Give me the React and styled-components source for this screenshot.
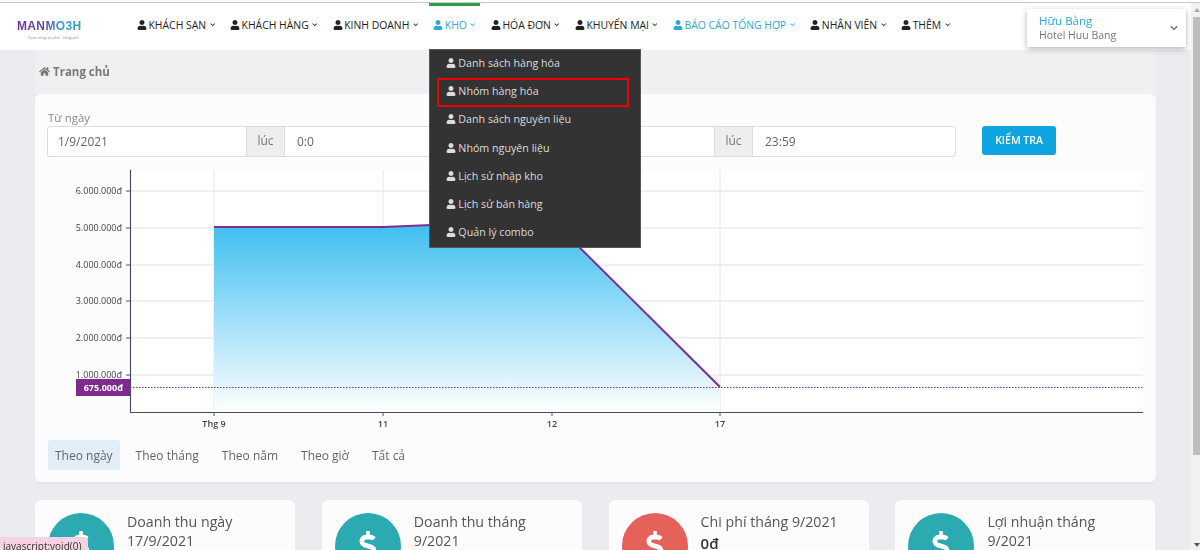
import React from "react";
import styled, { createGlobalStyle } from "styled-components";
import { FaUser, FaHome, FaDollarSign, FaChevronDown } from "react-icons/fa";

const Global = createGlobalStyle`
  html, body { margin: 0; height: 550px; overflow: hidden; background: #ebecf0; }
  body { font-family: "Open Sans", "Noto Sans", sans-serif; color: #555; }
  * { box-sizing: border-box; }
`;

const Page = styled.div`
  position: relative;
  width: 1200px;
  height: 550px;
  overflow: hidden;
  filter: blur(0.35px);
`;
const TopStrip = styled.div`
  height: 3px;
  background: #fff;
  border-bottom: 1px solid #c9c9c9;
`;
const Nav = styled.header`
  height: 47px;
  background: #fff;
  display: flex;
  align-items: stretch;
  padding-left: 17px;
  position: relative;
`;
const Logo = styled.div`
  width: 116px;
  flex: none;
  display: flex;
  flex-direction: column;
  padding-top: 16px;
`;
const LogoMark = styled.span`
  font: 700 12px/14px "Liberation Sans", sans-serif;
  letter-spacing: 0.35px;
  background: linear-gradient(90deg, #7b2d96 0%, #5f45ad 42%, #2f9fdc 68%, #2f9fdc 100%);
  -webkit-background-clip: text;
  background-clip: text;
  color: transparent;
  width: 66px;
`;
const LogoSub = styled.span`
  font: 4px/5px "Open Sans", sans-serif;
  color: #888;
  padding-left: 11px;
  margin-top: 2px;
`;
const Menu = styled.nav`
  display: flex;
  align-items: stretch;
  gap: 7px;
`;
const MenuItem = styled.div`
  position: relative;
  display: flex;
  align-items: center;
  gap: 1.5px;
  padding: 0 4px 7px;
  font-size: 10.4px;
  white-space: nowrap;
  color: ${(p) => (p.$blue ? "#2ea7e0" : "#222")};
  text-transform: uppercase;
  border-top: 3px solid ${(p) => (p.$active ? "#2f9e44" : "transparent")};
`;
const Caret = styled(FaChevronDown)`
  font-size: 5.5px;
  margin-left: 2px;
`;
const UserIcon = styled(FaUser)`
  font-size: 10px;
  flex: none;
`;
const Dropdown = styled.div`
  position: absolute;
  top: 43px;
  left: 0;
  width: 212px;
  height: 199px;
  background: #333;
  border: 1px solid #555;
  z-index: 5;
  text-transform: none;
`;
const DropItem = styled.div`
  height: 28.2px;
  display: flex;
  align-items: center;
  gap: 2px;
  padding: 0 0 2px 16px;
  font-size: 10.7px;
  color: #dcdcdc;
`;
const RedBox = styled.div`
  position: absolute;
  left: 7px;
  top: 28px;
  width: 192px;
  height: 29px;
  border: 2px solid #f00000;
`;
const UserBox = styled.div`
  position: absolute;
  left: 1027px;
  top: 6px;
  width: 159px;
  height: 38px;
  background: #fff;
  box-shadow: 0 2px 6px rgba(0, 0, 0, 0.3);
  display: flex;
  align-items: center;
  justify-content: space-between;
  padding: 0 8px 0 12px;
  z-index: 3;
`;
const UserName = styled.div`
  font-size: 11.5px;
  line-height: 14px;
  color: #2ea7e0;
`;
const UserHotel = styled.div`
  font-size: 10.5px;
  line-height: 14px;
  color: #777;
`;
const UserCaret = styled(FaChevronDown)`
  font-size: 8px;
  color: #666;
`;
const Crumb = styled.div`
  margin: 0 44px 0 35px;
  height: 44px;
  display: flex;
  align-items: center;
  gap: 3px;
  padding: 0 4px 2px;
  background: #f0f0f2;
  font-size: 11.5px;
  font-weight: 700;
  color: #777;
`;
const Content = styled.main`
  padding: 0 44px 0 35px;
`;
const Card = styled.section`
  background: #fcfcfc;
  border-radius: 6px;
  box-shadow: 0 1px 2px rgba(0, 0, 0, 0.04);
  height: 388px;
  padding-top: 15px;
`;
const Form = styled.div`
  display: flex;
  align-items: flex-end;
  padding: 0 12px;
  height: 48px;
`;
const Field = styled.div`
  width: 444px;
  margin-right: ${(p) => p.$gap}px;
`;
const Label = styled.div`
  font-size: 11.4px;
  line-height: 16px;
  padding-left: 1px;
  color: #888;
`;
const Group = styled.div`
  display: flex;
  height: 31px;
  border: 1px solid #dcdcdc;
  border-radius: 3px;
  background: #fff;
`;
const Input = styled.div`
  flex: ${(p) => (p.$w ? `0 0 ${p.$w}px` : 1)};
  padding-left: ${(p) => (p.$w ? 10 : 12)}px;
  font-size: 12px;
  line-height: 30px;
  color: #666;
`;
const Addon = styled.div`
  flex: 0 0 39px;
  background: #eeeeee;
  border: 1px solid #dcdcdc;
  border-width: 0 1px;
  text-align: center;
  font-size: 12px;
  line-height: 27px;
  color: #777;
`;
const CheckBtn = styled.div`
  width: 74px;
  height: 29px;
  margin: 0 0 2px 26px;
  background: #0ea5e0;
  border-radius: 3px;
  color: #fff;
  font-size: 10.5px;
  font-weight: 600;
  text-align: center;
  line-height: 29px;
`;
const ChartSvg = styled.svg`
  display: block;
  margin-top: 13px;
  font-family: "Open Sans", sans-serif;
`;
const Tabs = styled.div`
  display: flex;
  padding-left: 13px;
  gap: 9px;
`;
const Tab = styled.div`
  height: 30px;
  line-height: 31px;
  padding: 0 7px;
  border-radius: 3px;
  font-size: 12px;
  color: #666;
  background: ${(p) => (p.$active ? "#e1eef8" : "transparent")};
`;
const Stats = styled.div`
  display: grid;
  grid-template-columns: repeat(4, 260px);
  column-gap: 26.8px;
  margin-top: 18px;
`;
const Stat = styled.div`
  background: #fcfcfc;
  border-radius: 6px;
  height: 120px;
  display: flex;
  padding: 13px 0 0 13px;
  gap: 13px;
`;
const Circle = styled.div`
  width: 66px;
  height: 66px;
  border-radius: 50%;
  background: ${(p) => p.$color};
  color: #fff;
  flex: none;
  display: flex;
  justify-content: center;
  padding-top: 18px;
  font-size: 30px;
`;
const StatTitle = styled.div`
  font-size: 14.2px;
  line-height: 20px;
  color: #555;
  margin-top: -1px;
`;
const StatValue = styled.div`
  font-size: 15px;
  line-height: 22px;
  font-weight: 600;
  color: #333;
`;
const Scrollbar = styled.div`
  position: absolute;
  right: 0;
  top: 3px;
  bottom: 0;
  width: 9px;
  background: #f1f1f1;
  z-index: 4;
`;
const ScrollThumb = styled.div`
  position: absolute;
  left: 2px;
  right: 0;
  top: 14px;
  height: 438px;
  background: #bdbdbd;
`;
const ScrollArrow = styled.div`
  position: absolute;
  left: 3px;
  ${(p) => (p.$down ? "bottom: 3px; border-top: 4px solid #555;" : "top: 5px; border-bottom: 4px solid #aaa;")}
  border-left: 3px solid transparent;
  border-right: 3px solid transparent;
`;
const Status = styled.div`
  position: absolute;
  left: 0;
  bottom: -1px;
  height: 14px;
  padding: 0 2px 0 3px;
  width: 88px;
  background: #f6d2e2;
  border-top-right-radius: 4px;
  font-size: 10px;
  line-height: 19px;
  color: #333;
  z-index: 6;
`;

const navItems = [
  { t: "Khách sạn" },
  { t: "Khách hàng" },
  { t: "Kinh doanh" },
  { t: "Kho", blue: true, active: true },
  { t: "Hóa đơn" },
  { t: "Khuyến mại" },
  { t: "Báo cáo tổng hợp", blue: true },
  { t: "Nhân viên" },
  { t: "Thêm" },
];
const drop = ["Danh sách hàng hóa", "Nhóm hàng hóa", "Danh sách nguyên liệu", "Nhóm nguyên liệu", "Lịch sử nhập kho", "Lịch sử bán hàng", "Quản lý combo"];
const yLabels = [
  ["6.000.000đ", 191],
  ["5.000.000đ", 228],
  ["4.000.000đ", 265],
  ["3.000.000đ", 301],
  ["2.000.000đ", 338],
  ["1.000.000đ", 375],
];
const xLabels = [["Thg 9", 214], ["11", 383], ["12", 552], ["17", 720]];
const tabs = [["Theo ngày", true], ["Theo tháng"], ["Theo năm"], ["Theo giờ"], ["Tất cả"]];
const stats = [
  { a: "Doanh thu ngày", b: "17/9/2021", c: "#2baab1" },
  { a: "Doanh thu tháng", b: "9/2021", c: "#2baab1" },
  { a: "Chi phí tháng 9/2021", v: "0đ", c: "#e5625a" },
  { a: "Lợi nhuận tháng", b: "9/2021", c: "#2baab1" },
];

function Chart() {
  return (
    <ChartSvg width="1121" height="270" viewBox="35 170 1121 270">
      <defs>
        <linearGradient id="area" x1="0" y1="220" x2="0" y2="412" gradientUnits="userSpaceOnUse">
          <stop offset="0" stopColor="#3abdf0" />
          <stop offset="1" stopColor="#ffffff" />
        </linearGradient>
      </defs>
      <rect x="130" y="170" width="1013" height="242" fill="#fff" />
      {yLabels.map(([, y]) => (
        <line key={y} x1="130" x2="1143" y1={y} y2={y} stroke="#e0e2e4" />
      ))}
      {xLabels.map(([, x]) => (
        <line key={x} x1={x} x2={x} y1="170" y2="412" stroke="#e4e6e8" />
      ))}
      <polygon points="214,227 383,227 552,220 720,387 720,412 214,412" fill="url(#area)" />
      <polyline points="214,227 383,227 552,220 720,387" fill="none" stroke="#7e2d96" strokeWidth="2" />
      <line x1="130" x2="1143" y1="387.5" y2="387.5" stroke="#7e2d96" strokeDasharray="1.5 1.5" />
      <line x1="130.5" x2="130.5" y1="170" y2="412" stroke="#4a4a66" strokeWidth="1.2" />
      <line x1="130" x2="1143" y1="412.5" y2="412.5" stroke="#4a4a66" strokeWidth="1.2" />
      {yLabels.map(([t, y]) => (
        <g key={t}>
          <line x1="126" x2="130" y1={y} y2={y} stroke="#555" />
          <text x="122" y={y + 3} textAnchor="end" fontSize="9" fill="#444">{t}</text>
        </g>
      ))}
      {xLabels.map(([t, x]) => (
        <g key={t}>
          <line x1={x} x2={x} y1="412" y2="416" stroke="#555" />
          <text x={x} y="427" textAnchor="middle" fontSize="9" fontWeight="600" fill="#444">{t}</text>
        </g>
      ))}
      <rect x="76" y="379" width="54" height="17" fill="#7e2a90" />
      <text x="123" y="391" textAnchor="end" fontSize="9" fontWeight="700" fill="#fff">675.000đ</text>
    </ChartSvg>
  );
}

export default function App() {
  return (
    <Page>
      <Global />
      <TopStrip />
      <Nav>
        <Logo>
          <LogoMark>MANMO3H</LogoMark>
          <LogoSub>Tam công sở phố · tổng phí</LogoSub>
        </Logo>
        <Menu>
          {navItems.map((n) => (
            <MenuItem key={n.t} $blue={n.blue} $active={n.active}>
              <UserIcon />
              {n.t}
              <Caret />
              {n.t === "Kho" && (
                <Dropdown>
                  {drop.map((d) => (
                    <DropItem key={d}>
                      <UserIcon />
                      {d}
                    </DropItem>
                  ))}
                  <RedBox />
                </Dropdown>
              )}
            </MenuItem>
          ))}
        </Menu>
        <UserBox>
          <div>
            <UserName>Hữu Bằng</UserName>
            <UserHotel>Hotel Huu Bang</UserHotel>
          </div>
          <UserCaret />
        </UserBox>
      </Nav>
      <Crumb>
        <FaHome size={11} />
        Trang chủ
      </Crumb>
      <Content>
        <Card>
          <Form>
            <Field $gap={21}>
              <Label>Từ ngày</Label>
              <Group>
                <Input $w={198}>1/9/2021</Input>
                <Addon>lúc</Addon>
                <Input>0:0</Input>
              </Group>
            </Field>
            <Field $gap={0}>
              <Label>Đến ngày</Label>
              <Group>
                <Input $w={201}>17/9/2021</Input>
                <Addon>lúc</Addon>
                <Input>23:59</Input>
              </Group>
            </Field>
            <CheckBtn>KIỂM TRA</CheckBtn>
          </Form>
          <Chart />
          <Tabs>
            {tabs.map(([t, a]) => (
              <Tab key={t} $active={a}>{t}</Tab>
            ))}
          </Tabs>
        </Card>
        <Stats>
          {stats.map((s) => (
            <Stat key={s.a}>
              <Circle $color={s.c}><FaDollarSign /></Circle>
              <div>
                <StatTitle>{s.a}</StatTitle>
                {s.b && <StatTitle>{s.b}</StatTitle>}
                {s.v && <StatValue>{s.v}</StatValue>}
              </div>
            </Stat>
          ))}
        </Stats>
      </Content>
      <Scrollbar>
        <ScrollArrow />
        <ScrollThumb />
        <ScrollArrow $down />
      </Scrollbar>
      <Status>javascript:void(0)</Status>
    </Page>
  );
}
